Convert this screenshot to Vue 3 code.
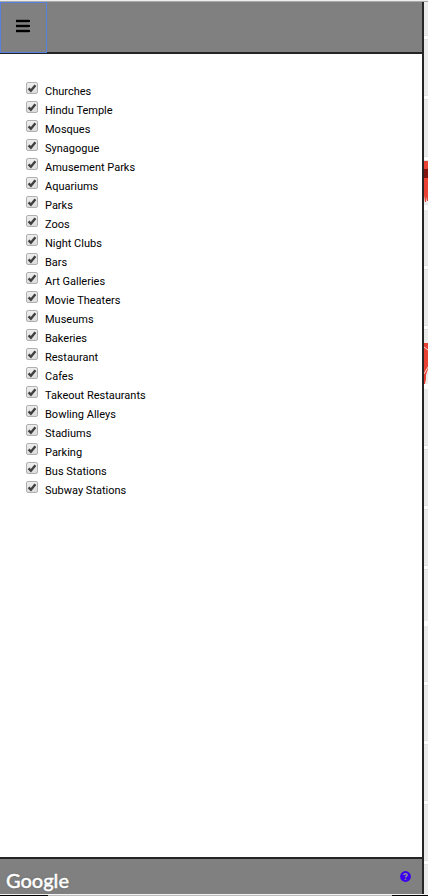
<script setup>
import { reactive } from 'vue'

const places = reactive(
  [
    'Churches', 'Hindu Temple', 'Mosques', 'Synagogue', 'Amusement Parks', 'Aquariums',
    'Parks', 'Zoos', 'Night Clubs', 'Bars', 'Art Galleries', 'Movie Theaters', 'Museums',
    'Bakeries', 'Restaurant', 'Cafes', 'Takeout Restaurants', 'Bowling Alleys', 'Stadiums',
    'Parking', 'Bus Stations', 'Subway Stations'
  ].map((name) => ({ name, id: name.toLowerCase().replace(/ /g, '-'), checked: true }))
)
const roads = [36, 96, 157, 206, 266, 326, 385, 446, 506, 566, 622, 682, 741, 801, 861]
</script>

<template>
  <div class="page">
    <div class="top-line"></div>
    <div class="content">
      <aside class="panel">
        <header class="bar">
          <button class="menu" type="button" aria-label="Menu">
            <svg width="14" height="14" viewBox="0 0 14 14" aria-hidden="true">
              <path d="M0 0h13v4H0zM0 5h13v4H0zM0 10h13v4H0z" fill="#000" fill-opacity=".2" />
              <path d="M0 1h14v2H0zM0 6h14v2H0zM0 11h14v2H0z" />
            </svg>
          </button>
        </header>
        <ul class="list">
          <li v-for="p in places" :key="p.id" class="row">
            <span class="tick">
              <input :id="p.id" v-model="p.checked" type="checkbox" />
              <svg v-if="p.checked" width="12" height="13" viewBox="0 0 12 13" aria-hidden="true">
                <path d="M2.6 6.4 4.9 8.8 9.4 3.2" />
              </svg>
            </span>
            <label :for="p.id">{{ p.name }}</label>
          </li>
        </ul>
        <footer class="foot">
          <a class="brand" href="#">Google</a>
          <a class="help" href="#" aria-label="Help">
            <svg width="11" height="11" viewBox="0 0 11 11" aria-hidden="true">
              <circle cx="5.5" cy="5.5" r="5.4" fill="#3c00f0" />
              <path d="M3.7 4.1C4 2.2 7.3 2.3 7.2 4.1 7.1 5.2 5.5 5.2 5.5 6.5" fill="none" stroke="#929292" stroke-width="1.4" />
              <circle cx="5.5" cy="8.2" r=".8" fill="#929292" />
            </svg>
          </a>
        </footer>
      </aside>
      <svg class="map" aria-hidden="true">
        <rect width="100%" height="100%" fill="#ebebeb" />
        <g v-for="y in roads" :key="y">
          <rect width="100%" height="5" :y="y - 3" fill="#e2e2e2" />
          <rect width="100%" height="3" :y="y - 2" fill="#fff" />
        </g>
        <rect width="100%" height="5" y="203" fill="#fff" />
        <rect width="100%" height="5" y="382" fill="#fff" />
        <rect width="100%" height="5" y="619" fill="#fff" />
        <path d="M0 159H4V199H3L2 195V200H1L0 193Z" fill="#ea4335" />
        <rect width="4" height="9" y="167" fill="#811411" />
        <path d="M0 341H4V367L2 373V377L1 382H0Z" fill="#ea4335" />
        <path d="M0 345 4 348M0 372 4 365" stroke="#f7dcd8" />
      </svg>
    </div>
    <div class="bottom-line"><i class="dark"></i><i class="mid"></i><i class="dark end"></i></div>
  </div>
</template>

<style>
body { margin: 0; background: #fff; }
</style>

<style scoped>
.page {
  display: flex;
  flex-direction: column;
  min-height: 100vh;
  font-family: Roboto, "Liberation Sans", sans-serif;
  font-size: 11px;
  color: #000;
}
.top-line { height: 1px; background: #eee; border-bottom: 1px solid #aaa; }
.content { flex: 1; display: grid; grid-template-columns: 1fr 4px; }
.panel { display: flex; flex-direction: column; border-right: 2px solid #242628; }
.bar { display: flex; height: 50px; background: #808080; border-bottom: 2px solid #242424; }
.menu {
  box-sizing: border-box;
  display: grid;
  place-items: center;
  width: 47px;
  height: 51px;
  padding: 0 2px 3px 0;
  background: #808080;
  border: 1px solid #5680dc;
}
.list { flex: 1; margin: 0; padding: 27px 26px; list-style: none; }
.row { display: flex; align-items: flex-start; gap: 7px; height: 19px; }
.row label { padding-top: 3px; line-height: 15px; }
.tick { display: grid; width: 12px; height: 13px; margin-top: 1px; }
.tick > * { grid-area: 1 / 1; }
.tick input {
  appearance: none;
  box-sizing: border-box;
  width: 12px;
  height: 12px;
  margin: 0;
  border: 1px solid #b0b0b0;
  border-radius: 2px;
  background: linear-gradient(#eee, #ddd);
}
.tick svg { pointer-events: none; z-index: 1; }
.tick path { fill: none; stroke: #404040; stroke-width: 2.4; }
.foot {
  box-sizing: border-box;
  display: flex;
  align-items: flex-start;
  justify-content: space-between;
  height: 37px;
  padding: 10px 11px 0 6px;
  background: #808080;
  border-top: 2px solid #242424;
}
.brand {
  font-family: Lato, sans-serif;
  font-size: 20px;
  line-height: 22px;
  font-weight: 500;
  color: #fff;
  text-decoration: none;
  -webkit-text-stroke: 0.4px #fff;
  text-shadow: 0 0 2px #555;
}
.help { display: flex; padding-top: 2px; }
.map { display: block; width: 4px; height: 100%; }
.bottom-line { display: flex; height: 1px; border-top: 1px solid #f4f4f4; }
.dark { width: 48px; background: #000; }
.mid { flex: 1; background: #bbb; }
.end { width: 36px; }
</style>
